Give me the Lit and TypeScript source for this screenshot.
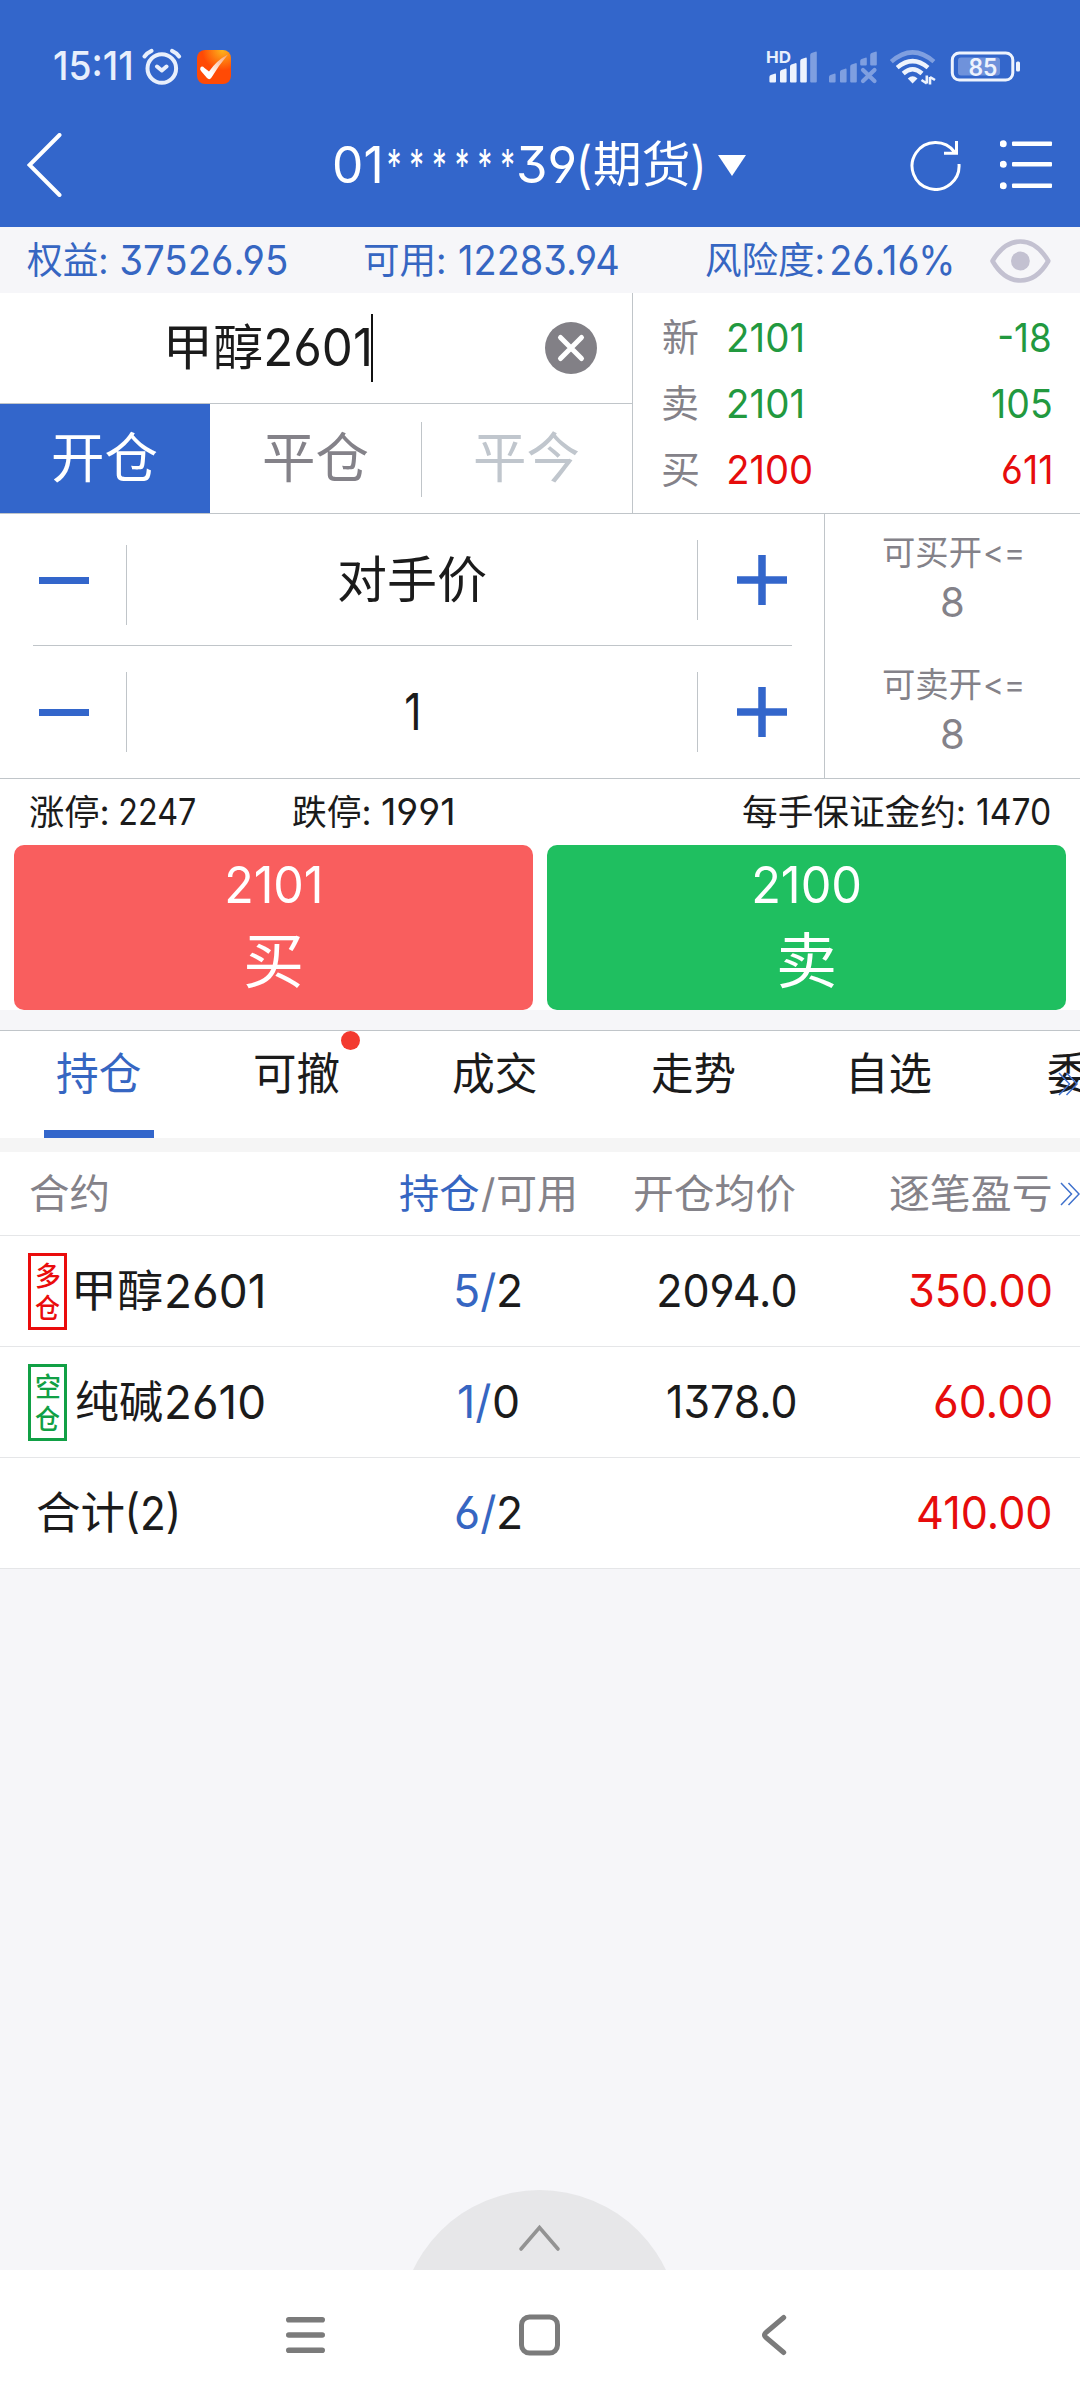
import { LitElement, html, css, svg, nothing } from "lit";
import { customElement, property } from "lit/decorators.js";

const measurer = document.createElement("canvas").getContext("2d")!;

/** One run of text whose visible ink fills exactly `w` pixels. */
@customElement("fit-text")
class FitText extends LitElement {
  @property() text = "";
  @property({ type: Number }) w = 0;

  static styles = css`
    :host { display: block; flex: none; line-height: 1.2; }
    .run { display: block; width: max-content; white-space: pre; transform-origin: 0 50%; }
  `;

  updated() {
    const run = this.renderRoot.querySelector<HTMLElement>(".run")!;
    const cs = getComputedStyle(this);
    run.style.transform = "none";
    measurer.font = `${cs.fontWeight} ${cs.fontSize} ${cs.fontFamily}`;
    measurer.letterSpacing = cs.letterSpacing === "normal" ? "0px" : cs.letterSpacing;
    const m = measurer.measureText(this.text);
    // Alternate digit forms change the advance slightly, which the canvas does not see.
    const drift = run.getBoundingClientRect().width - m.width;
    const scale = this.w / (m.actualBoundingBoxRight + m.actualBoundingBoxLeft + drift);
    this.style.width = `${this.w}px`;
    run.style.transform = `translateX(${m.actualBoundingBoxLeft * scale}px) scaleX(${scale})`;
  }

  render() {
    return html`<span class="run">${this.text}</span>`;
  }
}

const cn = (text: string, w: number, extra = "") =>
  html`<fit-text class="cn ${extra}" .text=${text} .w=${w}></fit-text>`;
const num = (text: string, w: number, extra = "") =>
  html`<fit-text class="num ${extra}" .text=${text} .w=${w}></fit-text>`;

const bar = (x: number, top: number, bottom: number, w = 6.6) =>
  svg`<path d="M${x} ${bottom}V${top + 3.4}q0 -1.4 1.4 -2L${x + w - 1.4} ${top + 0.2}q1.4 -0.6 1.4 1V${bottom - 1}q0 1 -1 1H${x + 1}q-1 0 -1 -1z"/>`;

interface Quote { label: string; price: string; pw: number; amount: string; aw: number; tone: string; }
const quotes: Quote[] = [
  { label: "新", price: "2101", pw: 73, amount: "-18", aw: 51, tone: "down" },
  { label: "卖", price: "2101", pw: 73, amount: "105", aw: 58.5, tone: "down" },
  { label: "买", price: "2100", pw: 82, amount: "611", aw: 47.5, tone: "up" },
];

interface Position {
  side: string; tone: string; name: string; code: string; cw: number;
  held: string; hw: number; free: string; fw: number;
  avg: string; avw: number; pnl: string; plw: number;
}
const positions: Position[] = [
  { side: "多", tone: "up", name: "甲醇", code: "2601", cw: 95.5, held: "5/", hw: 40, free: "2", fw: 21.5, avg: "2094.0", avw: 136, pnl: "350.00", plw: 140.5 },
  { side: "空", tone: "down", name: "纯碱", code: "2610", cw: 96.5, held: "1/", hw: 32, free: "0", fw: 23.5, avg: "1378.0", avw: 127, pnl: "60.00", plw: 115.5 },
];

const tabs = [["持仓", 83.5], ["可撤", 84], ["成交", 83.5], ["走势", 83], ["自选", 79], ["委托", 83]] as const;

@customElement("app-root")
class AppRoot extends LitElement {
  static styles = css`
    :host {
      display: flex; flex-direction: column; width: 1080px; height: 2400px; overflow: hidden;
      background: #f6f6f9; color: #1b1b1b;
      font-family: Inter, "Noto Sans CJK SC", sans-serif;
      font-feature-settings: "cv03", "cv04", "cv09";
      --blue: #3366cb; --line: #c0c5c9; --gray: #848289;
    }
    * { box-sizing: border-box; }
    svg { display: block; flex: none; }
    .cn { font-size: var(--cn); }
    .num { font-size: var(--num); }
    .up { color: #e60c0c; }
    .down { color: #22993f; }
    .blue { color: #3666c2; }
    .row { display: flex; align-items: center; }

    .top { background: var(--blue); height: 227px; color: #fff; flex: none; }
    .status { height: 104px; padding: 29px 60px 0 54px; --num: 39.5px; color: #e8effc; font-weight: 500; }
    .status .alarm { margin-left: 10px; }
    .status .app { margin-left: 15px; }
    .status .radios { margin-left: auto; }
    .nav { height: 123px; padding: 0 27px 1px; --num: 51px; --cn: 49px; }
    .nav .title { margin-left: 272.5px; }
    .nav .star { margin: 0 5.5px 0 8px; font-size: 44px; letter-spacing: 12px; }
    .nav .open { margin: 0 3.5px 0 5.5px; }
    .nav .close { margin-left: 4px; }
    .nav .caret { margin-left: 15px; }
    .nav .reload { margin-left: auto; margin-right: 38px; }

    .info {
      display: grid; grid-template-columns: 338px 341px 284px 61px; align-items: center;
      height: 66px; padding: 2px 0 0 27px; --cn: 37px; --num: 41px; color: #3666c2; flex: none;
    }
    .info .row { gap: 14.5px; }
    .info .tight { gap: 9px; }

    .quote { display: grid; grid-template-columns: 632px 448px; height: 221px; background: #fff; border-bottom: 1px solid var(--line); flex: none; }
    .field { height: 111px; padding: 0 35px 0 169px; border-bottom: 1px solid var(--line); --cn: 49px; --num: 52px; }
    .field .num { margin-left: 5px; }
    .field .cursor { width: 2px; height: 68px; margin-left: 2px; background: #111; }
    .field svg { margin-left: auto; }
    .modes { display: grid; grid-template-columns: 210px 211px 211px; height: 109px; --cn: 54px; }
    .mode { display: flex; align-items: center; justify-content: center; color: var(--gray); padding-top: 2px; }
    .mode.on { background: var(--blue); color: #fff; }
    .mode.off { color: #c0c6cd; justify-content: flex-start; }
    .mode.off::before { content: ""; width: 1px; height: 75px; background: var(--line); margin-right: 53px; }
    .book { border-left: 1px solid var(--line); padding: 12px 30px 10px; --cn: 38px; --num: 40px; }
    .book .row { height: 66px; }
    .book .cn { color: var(--gray); margin-right: 31px; }
    .book .last { margin-left: auto; }

    .order { display: grid; grid-template-columns: 824px 256px; height: 265px; background: #fff; border-bottom: 1px solid var(--line); flex: none; --cn: 50px; --num: 51px; }
    .step { display: grid; grid-template-columns: 126px 1px 570px 1px 126px; height: 132px; align-items: center; justify-items: center; }
    .rule { height: 1px; margin: -1px 32px 0 33px; background: var(--line); }
    .sep { width: 1px; height: 80px; background: var(--line); }
    .sep.low { margin-top: 10px; }
    .minus { width: 50px; height: 7px; background: var(--blue); margin-left: 2px; }
    .plus { margin-left: 2px; }
    .limits { border-left: 1px solid var(--line); color: var(--gray); --cn: 34px; --num: 41px; }
    .limit { height: 132px; padding-top: 19px; display: flex; flex-direction: column; align-items: center; gap: 5px; }
    .limit .row { height: 40px; gap: 4px; }
    .limit .cmp { font-size: 32px; }

    .band { height: 66px; padding: 0 30px 0 29.5px; background: #fff; --cn: 35px; --num: 37px; flex: none; }
    .band .row { gap: 13px; }
    .band .second { margin-left: 97px; }
    .band .third { margin-left: auto; }

    .deal { display: grid; grid-template-columns: 1fr 1fr; gap: 14px; height: 165px; padding: 0 14px; background: #fff; flex: none; --num: 51px; --cn: 60px; }
    .side { border-radius: 10px; color: #fff; display: flex; flex-direction: column; align-items: center; gap: 10px; padding-top: 9px; }
    .buy { background: #f95e5e; }
    .sell { background: #1fbf60; }

    .tabs { position: relative; display: flex; margin-top: 20px; height: 108px; border-top: 1px solid var(--line); background: #fff; overflow: hidden; flex: none; --cn: 44px; }
    .tab { position: relative; flex: none; width: 198px; padding-top: 17px; display: flex; justify-content: center; }
    .tab.on { color: #3666c2; }
    .tab.on::after { content: ""; position: absolute; left: 44px; bottom: 0; width: 110px; height: 8px; background: var(--blue); }
    .dot { position: absolute; left: 143px; top: 0; width: 19px; height: 19px; border-radius: 50%; background: #f33a2f; }
    .more { position: absolute; left: 1058px; top: 41px; }

    .table { border-top: 14px solid #f5f5f5; background: #fff; flex: none; --cn: 44px; --num: 45.5px; }
    .line { display: grid; grid-template-columns: 388px 200px 207px 255px 30px; align-items: center; height: 111px; border-bottom: 1px solid #e5e6e8; }
    .head { height: 84px; --cn: 40px; --num: 40px; color: var(--gray); }
    .end { display: flex; justify-content: flex-end; }
    .mid { justify-content: center; gap: 3px; }
    .head .mid { padding-right: 2px; }
    .name { padding-left: 28px; }
    .name .cn { margin-left: 9px; }
    .name .num { margin-left: 4.5px; font-size: 47px; }
    .head .name .cn { margin-left: 2px; }
    .tag { width: 39px; height: 77px; border: 3px solid currentColor; display: flex; flex-direction: column; align-items: center; padding-top: 5px; }
    .name .tag .cn { font-size: 27px; margin: 0; font-weight: 500; }
    .tag.down { color: #11a045; }
    .tag.up { color: #ea0c0c; }
    .next { padding-left: 10px; }

    .blank { flex: 1; display: flex; align-items: flex-end; justify-content: center; }
    .system { height: 130px; background: #fff; flex: none; padding-left: 286px; }
    .system .home { margin: 0 201px 0 193.5px; }
  `;

  private amount(held: string, hw: number, free: string, fw: number) {
    return html`<div class="row mid">${num(held, hw, "blue")}${num(free, fw)}</div>`;
  }

  private chevrons() {
    return html`<svg width="20" height="24" viewBox="0 0 20 24" fill="none" stroke="#3f71cc" stroke-width="1.5">
      <path d="M1 1L11.500 12L1 23M8.500 1L19 12L8.500 23"/></svg>`;
  }

  private step(value: unknown, low: boolean) {
    return html`<div class="step">
      <i class="minus"></i><i class="sep ${low ? "low" : ""}"></i>${value}<i class="sep"></i>
      <svg class="plus" width="50" height="50" viewBox="0 0 50 50"><path d="M0 25H50M25 0V50" stroke="#3366cb" stroke-width="7.500"/></svg>
    </div>`;
  }

  private statusBar() {
    return html`<div class="row status">
      ${num("15:11", 77.5)}
      <svg class="alarm" width="40" height="38" viewBox="141.500 47 40 38" fill="none" stroke="#e8effc" stroke-width="4" stroke-linecap="round" stroke-linejoin="round">
        <circle cx="161.300" cy="67.500" r="14.300"/><path d="M156.500 65.500L161.300 69.500L166 65.500M144 55.500Q147 51.500 151 49.800M178.600 55.500Q175.600 51.500 171.600 49.800"/>
      </svg>
      <svg class="app" width="34" height="34" viewBox="0 0 34 34">
        <defs>
          <radialGradient id="warm" cx="0.75" cy="0" r="0.6"><stop offset="0" stop-color="#fdb51c"/><stop offset="1" stop-color="#ff4a05"/></radialGradient>
          <linearGradient id="tick" x1="0" y1="1" x2="1" y2="0"><stop offset="0.300" stop-color="#fff"/><stop offset="1" stop-color="#f9a070"/></linearGradient>
        </defs>
        <rect width="34" height="34" rx="8" fill="url(#warm)"/>
        <path d="M3.500 17.500Q5 15.500 7.500 18L12 21.500Q20 10 31 4.500Q22 15 14.500 27.500Q12.500 30.500 10 28L4 21Q2.500 19 3.500 17.500z" fill="url(#tick)"/>
      </svg>
      <svg class="radios" width="254" height="38" viewBox="766 47.500 254 38">
        <text x="766" y="62" font-size="16.500" font-weight="700" textLength="25" lengthAdjust="spacingAndGlyphs" fill="#e8effc">HD</text>
        <g fill="#eef3fd">${bar(769.400, 73, 82)}${bar(780, 68, 82)}${bar(790, 62.500, 82)}${bar(800.200, 57, 82)}</g>
        <g fill="#7f9fe0">${bar(810.200, 51, 82)}${bar(829, 73, 82)}${bar(840, 68, 82)}${bar(850.200, 62.500, 82)}${bar(860.200, 57, 65)}${bar(870.200, 51, 65)}</g>
        <path d="M863 69.500L874.500 80.500M874.500 69.500L863 80.500" stroke="#7f9fe0" stroke-width="4.200" stroke-linecap="round"/>
        <g fill="none" stroke-width="4.400">
          <path d="M891.300 61.200Q912.600 42.500 933.900 61.200" stroke="#7f9fe0"/>
          <path d="M897.200 67.200Q912.600 54 928 67.200" stroke="#eef3fd"/>
          <path d="M903.200 73Q912.600 64.500 922 73" stroke="#eef3fd"/>
        </g>
        <path d="M907.800 78Q912.600 73.500 917.500 78L912.600 83z" fill="#eef3fd"/>
        <path d="M926.800 75V83M921.500 79.500L926.800 83M930 84V76.500M930 76.500L935 79.500" stroke="#eef3fd" stroke-width="2.600" fill="none"/>
        <rect x="952.300" y="52.500" width="60.500" height="27" rx="7" fill="none" stroke="#eef3fd" stroke-width="3"/>
        <rect x="958" y="57" width="42" height="18" rx="3" fill="#6f92db"/>
        <rect x="1016" y="61" width="4" height="10" rx="1.500" fill="#eef3fd"/>
        <text x="968.500" y="75" font-size="24" font-weight="600" textLength="29" lengthAdjust="spacingAndGlyphs" fill="#eef3fd">85</text>
      </svg>
    </div>`;
  }

  private navBar() {
    return html`<div class="row nav">
      <svg width="35" height="64" viewBox="27 133 35 64" fill="none" stroke="#fff" stroke-width="4" stroke-linecap="round"><path d="M59.500 135L29.500 165L59.500 195"/></svg>
      <div class="row title">
        ${num("01", 45)}${num("******", 125.5, "star")}${num("39", 55.5)}${num("(", 10.5, "open")}${cn("期货", 94.5)}${num(")", 10.5, "close")}
        <svg class="caret" width="28" height="21" viewBox="0 0 28 21"><path d="M0 0H28L14 21z" fill="#fff"/></svg>
      </div>
      <svg class="reload" width="52" height="52" viewBox="909 139 52 52" fill="none" stroke="#fff" stroke-width="3">
        <path d="M958 164A23.500 23.500 0 1 1 953.500 152M955.500 141V153.300H943"/>
      </svg>
      <svg width="53" height="52" viewBox="1000 139 53 52" fill="#fff">
        ${[143.700, 164.200, 185.700].map((y) => svg`<circle cx="1003.200" cy=${y} r="3.500"/><rect x="1012" y=${y - 2.200} width="40" height="4.400" rx="1"/>`)}
      </svg>
    </div>`;
  }

  render() {
    return html`
      <header class="top">${this.statusBar()}${this.navBar()}</header>

      <section class="info">
        <div class="row">${cn("权益:", 79)}${num("37526.95", 165.500)}</div>
        <div class="row">${cn("可用:", 79)}${num("12283.94", 159.5)}</div>
        <div class="row tight">${cn("风险度:", 116.500)}${num("26.16%", 119.500)}</div>
        <svg width="61" height="44" viewBox="990 238.500 61 44" fill="none" stroke="#c3c1d1" stroke-width="4.600">
          <path d="M992.500 260.500Q1004 241 1020.400 241T1048.300 260.500Q1037 280 1020.400 280T992.500 260.500z" stroke-linejoin="round"/>
          <circle cx="1020.400" cy="260.500" r="9.400" fill="#c3c1d1" stroke="none"/>
        </svg>
      </section>

      <section class="quote">
        <div>
          <div class="row field">
            ${cn("甲醇", 92)}${num("2601", 103)}<i class="cursor"></i>
            <svg width="52" height="52" viewBox="0 0 52 52"><circle cx="26" cy="26" r="26" fill="#828086"/><path d="M15.500 15.500L36.500 36.500M36.500 15.500L15.500 36.500" stroke="#fff" stroke-width="5" stroke-linecap="round"/></svg>
          </div>
          <div class="modes">
            <div class="mode on">${cn("开仓", 104)}</div>
            <div class="mode">${cn("平仓", 104)}</div>
            <div class="mode off">${cn("平今", 104)}</div>
          </div>
        </div>
        <div class="book">
          ${quotes.map((q) => html`<div class="row">${cn(q.label, 35)}${num(q.price, q.pw, q.tone)}${num(q.amount, q.aw, `last ${q.tone}`)}</div>`)}
        </div>
      </section>

      <section class="order">
        <div>
          ${this.step(cn("对手价", 147), true)}
          <div class="rule"></div>
          ${this.step(num("1", 12.500), false)}
        </div>
        <div class="limits">
          ${["可买开", "可卖开"].map((label) => html`<div class="limit">
            <div class="row">${cn(label, 98)}${num("<=", 37, "cmp")}</div>${num("8", 20.500)}
          </div>`)}
        </div>
      </section>

      <section class="row band">
        <div class="row">${cn("涨停:", 77.500)}${num("2247", 75.500)}</div>
        <div class="row second">${cn("跌停:", 76.500)}${num("1991", 70.5)}</div>
        <div class="row third">${cn("每手保证金约:", 221)}${num("1470", 73)}</div>
      </section>

      <section class="deal">
        <div class="side buy">${num("2101", 93)}${cn("买", 55)}</div>
        <div class="side sell">${num("2100", 106)}${cn("卖", 55)}</div>
      </section>

      <nav class="tabs">
        ${tabs.map(([label, w], i) => html`<div class="tab ${i === 0 ? "on" : ""}">${cn(label, w)}${i === 1 ? html`<i class="dot"></i>` : nothing}</div>`)}
        <div class="more">${this.chevrons()}</div>
      </nav>

      <section class="table">
        <div class="line head">
          <div class="row name">${cn("合约", 77)}</div>
          <div class="row mid">${cn("持仓", 78.500, "blue")}${num("/", 14)}${cn("可用", 76)}</div>
          <div class="end">${cn("开仓均价", 160)}</div>
          <div class="end">${cn("逐笔盈亏", 160.500)}</div>
          <div class="next">${this.chevrons()}</div>
        </div>
        ${positions.map((p) => html`<div class="line">
          <div class="row name"><div class="tag ${p.tone}">${cn(p.side, 24)}${cn("仓", 25)}</div>${cn(p.name, 86)}${num(p.code, p.cw)}</div>
          ${this.amount(p.held, p.hw, p.free, p.fw)}
          <div class="end">${num(p.avg, p.avw)}</div>
          <div class="end">${num(p.pnl, p.plw, "up")}</div>
        </div>`)}
        <div class="line">
          <div class="row name">${cn("合计", 87)}${num("(2)", 48.500)}</div>
          ${this.amount("6/", 40, "2", 21.5)}
          <div></div>
          <div class="end">${num("410.00", 132, "up")}</div>
        </div>
      </section>

      <div class="blank">
        <svg width="280" height="80" viewBox="0.500 0 280 80"><circle cx="140" cy="140" r="140" fill="#e7e7e9"/><path d="M121.500 59L140 37.500L158.500 59" fill="none" stroke="#939393" stroke-width="3.600" stroke-linecap="round"/></svg>
      </div>

      <footer class="row system">
        <svg width="39" height="42" viewBox="0 0 39 42" stroke="#7b7b7b" stroke-width="5.600" stroke-linecap="round"><path d="M2.800 5.700H36.200M2.800 21H36.200M2.800 36.300H36.200"/></svg>
        <svg class="home" width="41" height="42" viewBox="0 0 41 42" fill="none" stroke="#7b7b7b" stroke-width="5"><rect x="2.500" y="3" width="36" height="36" rx="8"/></svg>
        <svg width="26" height="42" viewBox="0 0 26 42" fill="none" stroke="#7b7b7b" stroke-width="5" stroke-linecap="round"><path d="M22.700 3.500L5 18.500Q1.800 21 5 23.500L22.700 38.500"/></svg>
      </footer>
    `;
  }
}
